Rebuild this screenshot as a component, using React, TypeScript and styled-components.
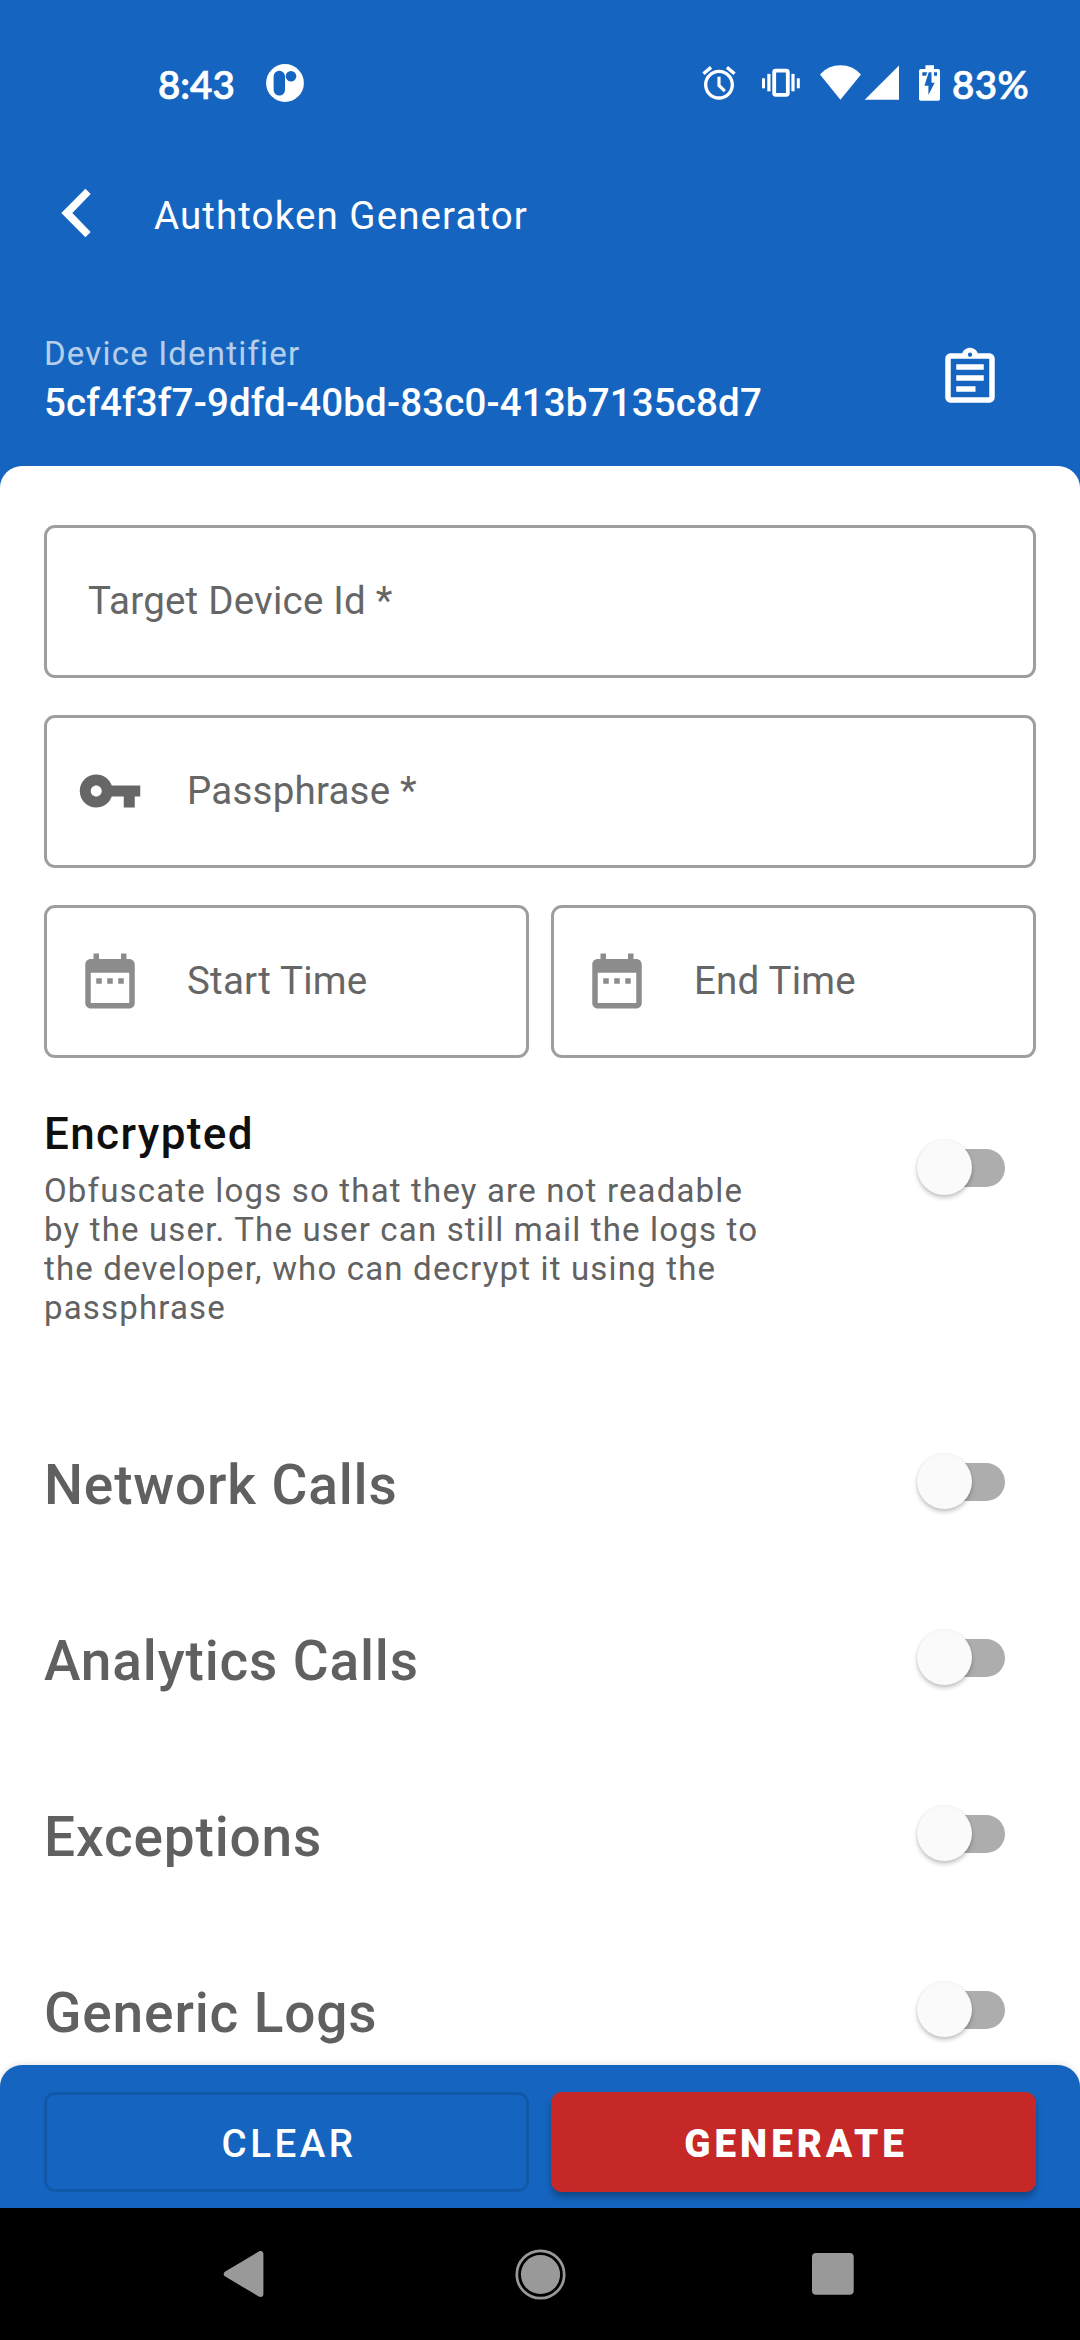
import React, { useState } from 'react';
import styled, { createGlobalStyle } from 'styled-components';

const BLUE = '#1565c0';

const GlobalStyle = createGlobalStyle`
  *, *::before, *::after { box-sizing: border-box; }
  html, body { margin: 0; padding: 0; background: ${BLUE}; }
  body { font-family: Roboto, "Liberation Sans", sans-serif; }
  svg { display: block; flex: none; }
`;

const Screen = styled.div`
  width: 1080px;
  height: 2340px;
  display: flex;
  flex-direction: column;
  background: ${BLUE};
  overflow: hidden;
`;

/* ---------- status bar ---------- */

const StatusBar = styled.header`
  height: 165px;
  flex: none;
  display: flex;
  align-items: center;
  padding-left: 158px;
  color: #fff;
`;

const StatusText = styled.span<{ $spacing?: number }>`
  font: 600 38.5px/46px Lato, Roboto, sans-serif;
  padding-top: 3px;
  letter-spacing: ${(p) => p.$spacing ?? 0}px;
  -webkit-text-stroke: 0.7px #fff;
`;

const AppBadge = styled.svg`
  margin-left: 31px;
`;

const StatusIcons = styled.div`
  width: 381px;
  margin-left: auto;
  display: flex;
  align-items: center;
`;

const IconSlot = styled.span<{ $after: number }>`
  display: block;
  margin-right: ${(p) => p.$after}px;
`;

/* ---------- header ---------- */

const Toolbar = styled.div`
  height: 99px;
  flex: none;
  display: flex;
  align-items: center;
  padding-left: 61px;
`;

const BackButton = styled.button`
  border: 0;
  padding: 0 0 3px;
  background: none;
  width: 93px;
`;

const Title = styled.h1`
  margin: 0;
  padding-top: 3px;
  color: #fff;
  font-size: 38.5px;
  font-weight: 400;
  line-height: 46px;
  letter-spacing: 1.09px;
`;

const DeviceRow = styled.section`
  height: 202px;
  flex: none;
  display: flex;
  justify-content: space-between;
  align-items: flex-start;
  padding: 70px 77px 0 44px;
`;

const DeviceInfo = styled.div`
  display: flex;
  flex-direction: column;
  gap: 5px;
`;

const DeviceLabel = styled.span`
  color: rgba(255, 255, 255, 0.7);
  font-size: 33px;
  line-height: 39px;
  letter-spacing: 1.18px;
`;

const DeviceValue = styled.span`
  color: #fff;
  font-size: 38.5px;
  font-weight: 500;
  line-height: 50px;
  letter-spacing: 0.157px;
`;

const CopyButton = styled.button`
  border: 0;
  padding: 0;
  margin-top: 11px;
  background: none;
`;

/* ---------- form ---------- */

const Sheet = styled.main`
  flex: 1;
  min-height: 0;
  margin-bottom: -22px;
  padding: 59px 44px 0;
  background: #fff;
  border-radius: 22px 22px 0 0;
  overflow: hidden;
`;

const Fields = styled.div`
  display: grid;
  grid-template-columns: 1fr 1fr;
  gap: 37px 22px;
`;

const FieldBox = styled.label<{ $wide?: boolean; $icon?: boolean }>`
  grid-column: ${(p) => (p.$wide ? 'span 2' : 'auto')};
  height: 153px;
  display: flex;
  align-items: center;
  gap: 44px;
  padding-bottom: 2px;
  padding-left: ${(p) => (p.$icon ? 30 : 41)}px;
  border: 3px solid #9e9e9e;
  border-radius: 11px;
`;

const FieldLabel = styled.span`
  color: #666;
  font-size: 38.5px;
  line-height: 46px;
  letter-spacing: 0.22px;
`;

const EncryptedRow = styled.section`
  display: flex;
  justify-content: space-between;
  height: 336px;
  padding-top: 50px;
`;

const EncryptedText = styled.div`
  width: 720px;
  display: flex;
  flex-direction: column;
  gap: 11px;
`;

const EncryptedTitle = styled.h2`
  margin: 0;
  color: #0f0f0f;
  font-size: 44px;
  font-weight: 500;
  line-height: 52px;
  letter-spacing: 1.375px;
`;

const Description = styled.p`
  margin: 0;
  color: #626262;
  font-size: 33px;
  line-height: 39px;
  letter-spacing: 1.17px;
`;

const OptionRow = styled.section`
  height: 176px;
  display: flex;
  align-items: center;
  justify-content: space-between;
`;

const OptionName = styled.h2`
  margin: 0;
  padding-top: 6px;
  color: #606060;
  font-size: 55px;
  font-weight: 500;
  line-height: 66px;
  letter-spacing: 0.85px;
`;

const Track = styled.button<{ $on: boolean; $top?: number }>`
  width: 77px;
  height: 38px;
  flex: none;
  display: flex;
  align-items: center;
  justify-content: ${(p) => (p.$on ? 'flex-end' : 'flex-start')};
  margin: ${(p) => p.$top ?? 0}px 31px 0 0;
  padding: 0;
  border: 0;
  border-radius: 19px;
  background: ${(p) => (p.$on ? '#8ab2df' : '#adadad')};
`;

const Thumb = styled.span<{ $on: boolean }>`
  width: 55px;
  height: 55px;
  flex: none;
  margin: -2px 0 0 ${(p) => (p.$on ? 0 : -11)}px;
  border-radius: 50%;
  background: ${(p) => (p.$on ? BLUE : '#fafafa')};
  box-shadow: 0 3px 4px rgba(0, 0, 0, 0.22), 0 0 3px rgba(0, 0, 0, 0.08);
`;

/* ---------- bottom ---------- */

const ActionBar = styled.footer`
  position: relative;
  height: 143px;
  flex: none;
  display: grid;
  grid-template-columns: 1fr 1fr;
  gap: 22px;
  padding: 27px 44px 16px;
  background: ${BLUE};
  border-radius: 22px 22px 0 0;
  box-shadow: 0 0 7px rgba(0, 0, 0, 0.14);
`;

const ActionButton = styled.button<{ $primary?: boolean }>`
  border: ${(p) => (p.$primary ? '0' : '3px solid rgba(0, 0, 0, 0.12)')};
  border-radius: 11px;
  padding: 3px 0 0 5px;
  background: ${(p) => (p.$primary ? '#c62828' : 'transparent')};
  box-shadow: ${(p) => (p.$primary ? '0 5px 7px rgba(0, 0, 0, 0.3)' : 'none')};
  color: #fff;
  font-family: inherit;
  font-size: 38.5px;
  font-weight: ${(p) => (p.$primary ? 900 : 500)};
  line-height: 46px;
  letter-spacing: ${(p) => (p.$primary ? 4.05 : 3.5)}px;
`;

const NavBar = styled.nav`
  position: relative;
  height: 132px;
  flex: none;
  display: flex;
  align-items: center;
  padding-left: 223px;
  background: #000;
`;

const NavSlot = styled.span<{ $after: number }>`
  margin-right: ${(p) => p.$after}px;
`;

/* ---------- icons ---------- */

const BadgeIcon = () => (
  <AppBadge width="38" height="38" viewBox="0 0 38 38">
    <circle cx="19" cy="19" r="18.9" fill="#fff" />
    <rect x="7.6" y="6.8" width="11.4" height="24.8" rx="5.6" fill={BLUE} />
    <circle cx="25" cy="12.2" r="5.3" fill={BLUE} />
  </AppBadge>
);

const AlarmIcon = () => (
  <svg width="40" height="40" viewBox="0 0 24 24" fill="#fff">
    <path d="M22 5.72l-4.6-3.86-1.29 1.53 4.6 3.86L22 5.72zM7.88 3.39L6.6 1.86 2 5.71l1.29 1.53 4.59-3.85zM12 4c-4.97 0-9 4.03-9 9s4.02 9 9 9c4.97 0 9-4.03 9-9s-4.03-9-9-9zm0 16c-3.87 0-7-3.13-7-7s3.13-7 7-7 7 3.13 7 7-3.13 7-7 7z" />
    <path d="M12 8.2v5.3l3.5 3.4" fill="none" stroke="#fff" strokeWidth="1.9" />
  </svg>
);

const VibrateIcon = () => (
  <svg width="38" height="30" viewBox="0 0 38 30" fill="#fff">
    <rect x="0" y="10.3" width="3" height="10" />
    <rect x="5.3" y="5.9" width="3.2" height="17.4" />
    <rect x="29.4" y="5.9" width="3.2" height="17.4" />
    <rect x="34.8" y="10.3" width="3" height="10" />
    <rect x="12.2" y="2.6" width="13.6" height="24.2" rx="1.5" fill="none" stroke="#fff" strokeWidth="3.8" />
  </svg>
);

const WifiIcon = () => (
  <svg width="41" height="35" viewBox="0 0 41 35" fill="#fff">
    <path d="M0 9.4A27.4 27.4 0 0 1 41 9.4L20.4 34.8z" />
  </svg>
);

const SignalIcon = () => (
  <svg width="35" height="35" viewBox="0 0 35 35" fill="#fff">
    <path d="M35 .6V34.7H.7z" />
  </svg>
);

const BatteryIcon = () => (
  <svg width="21" height="36" viewBox="0 0 21 36" fill="#fff">
    <path d="M6.4 .3h8.6v3.6h4q2 0 2 2V34q0 1.7-1.7 1.7H1.7Q0 35.7 0 34V5.9q0-2 2-2h4.4z" />
    <path d="M3.3 7.3H8.3L7 10.7H3.3zM15 7.3h3v3.4h-3zM9.8 7.3h2.7v10.4h3.2L9.4 30v-9.3H5.4z" fill={BLUE} />
  </svg>
);

const BackIcon = () => (
  <svg width="30" height="50" viewBox="0 0 30 50" fill="#fff">
    <path d="M24.4 .7L29.7 6L11.3 25L29.7 44L24.4 49.3L.3 25z" />
  </svg>
);

const ClipboardIcon = () => (
  <svg width="66" height="66" viewBox="0 0 24 24" fill="#fff">
    <path d="M7 15h7v2H7zm0-4h10v2H7zm0-4h10v2H7zm12-4h-4.18C14.4 1.84 13.3 1 12 1s-2.4.84-2.82 2H5c-1.1 0-2 .9-2 2v14c0 1.1.9 2 2 2h14c1.1 0 2-.9 2-2V5c0-1.1-.9-2-2-2zm-7-.25c.41 0 .75.34.75.75s-.34.75-.75.75-.75-.34-.75-.75.34-.75.75-.75zM19 19H5V5h14v14z" />
  </svg>
);

const KeyIcon = () => (
  <svg width="66" height="66" viewBox="0 0 24 24" fill="#666">
    <path d="M12.65 10C11.83 7.67 9.61 6 7 6c-3.31 0-6 2.69-6 6s2.69 6 6 6c2.61 0 4.83-1.67 5.65-4H17v4h4v-4h2v-4H12.65zM7 14c-1.1 0-2-.9-2-2s.9-2 2-2 2 .9 2 2-.9 2-2 2z" />
  </svg>
);

const CalendarIcon = () => (
  <svg width="66" height="66" viewBox="0 0 24 24" fill="#8c8c8c">
    <path d="M9 11H7v2h2v-2zm4 0h-2v2h2v-2zm4 0h-2v2h2v-2zm2-7h-1V2h-2v2H8V2H6v2H5c-1.11 0-1.99.9-1.99 2L3 20c0 1.1.89 2 2 2h14c1.1 0 2-.9 2-2V6c0-1.1-.9-2-2-2zm0 16H5V9h14v11z" />
  </svg>
);

const NavBackIcon = () => (
  <svg width="41" height="46" viewBox="0 0 41 46">
    <path d="M3.8 23L37.4 3V43z" fill="#999" stroke="#999" strokeWidth="6" strokeLinejoin="round" />
  </svg>
);

const NavHomeIcon = () => (
  <svg width="51" height="51" viewBox="0 0 51 51">
    <circle cx="25.5" cy="25.5" r="23.7" fill="none" stroke="#999" strokeWidth="2.7" />
    <circle cx="25.5" cy="25.5" r="19.6" fill="#999" />
  </svg>
);

const NavRecentIcon = () => (
  <svg width="42" height="42" viewBox="0 0 42 42">
    <rect width="41.7" height="41.7" rx="4" fill="#999" />
  </svg>
);

/* ---------- screen ---------- */

const Toggle = ({ top }: { top?: number }) => {
  const [on, setOn] = useState(false);
  return (
    <Track $on={on} $top={top} role="switch" aria-checked={on} onClick={() => setOn(!on)}>
      <Thumb $on={on} />
    </Track>
  );
};

const options = ['Network Calls', 'Analytics Calls', 'Exceptions', 'Generic Logs'];

export default function App() {
  return (
    <Screen>
      <GlobalStyle />
      <StatusBar>
        <StatusText>8:43</StatusText>
        <BadgeIcon />
        <StatusIcons>
          <IconSlot $after={23}><AlarmIcon /></IconSlot>
          <IconSlot $after={20}><VibrateIcon /></IconSlot>
          <IconSlot $after={3}><WifiIcon /></IconSlot>
          <IconSlot $after={20}><SignalIcon /></IconSlot>
          <IconSlot $after={12}><BatteryIcon /></IconSlot>
          <StatusText $spacing={0.4}>83%</StatusText>
        </StatusIcons>
      </StatusBar>

      <Toolbar>
        <BackButton aria-label="Back"><BackIcon /></BackButton>
        <Title>Authtoken Generator</Title>
      </Toolbar>

      <DeviceRow>
        <DeviceInfo>
          <DeviceLabel>Device Identifier</DeviceLabel>
          <DeviceValue>5cf4f3f7-9dfd-40bd-83c0-413b7135c8d7</DeviceValue>
        </DeviceInfo>
        <CopyButton aria-label="Copy"><ClipboardIcon /></CopyButton>
      </DeviceRow>

      <Sheet>
        <Fields>
          <FieldBox $wide><FieldLabel>Target Device Id *</FieldLabel></FieldBox>
          <FieldBox $wide $icon><KeyIcon /><FieldLabel>Passphrase *</FieldLabel></FieldBox>
          <FieldBox $icon><CalendarIcon /><FieldLabel>Start Time</FieldLabel></FieldBox>
          <FieldBox $icon><CalendarIcon /><FieldLabel>End Time</FieldLabel></FieldBox>
        </Fields>

        <EncryptedRow>
          <EncryptedText>
            <EncryptedTitle>Encrypted</EncryptedTitle>
            <Description>
              Obfuscate logs so that they are not readable by the user. The user can still mail the
              logs to the developer, who can decrypt it using the passphrase
            </Description>
          </EncryptedText>
          <Toggle top={41} />
        </EncryptedRow>

        {options.map((name) => (
          <OptionRow key={name}>
            <OptionName>{name}</OptionName>
            <Toggle />
          </OptionRow>
        ))}
      </Sheet>

      <ActionBar>
        <ActionButton>CLEAR</ActionButton>
        <ActionButton $primary>GENERATE</ActionButton>
      </ActionBar>

      <NavBar>
        <NavSlot $after={251}><NavBackIcon /></NavSlot>
        <NavSlot $after={246}><NavHomeIcon /></NavSlot>
        <NavSlot $after={0}><NavRecentIcon /></NavSlot>
      </NavBar>
    </Screen>
  );
}
